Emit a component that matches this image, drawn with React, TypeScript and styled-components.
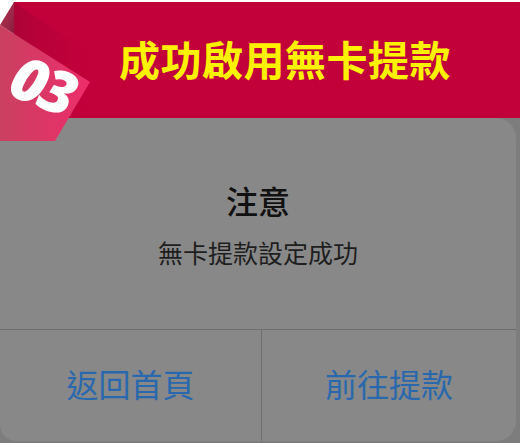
import styled, { createGlobalStyle } from "styled-components";

const GlobalStyle = createGlobalStyle`
  html, body {
    margin: 0;
    padding: 0;
    background: #ffffff;
  }
  body {
    font-family: "Noto Sans CJK TC", "Noto Sans", sans-serif;
  }
`;

const Stage = styled.div`
  position: relative;
  width: 520px;
  height: 443px;
  overflow: hidden;
  display: flex;
  flex-direction: column;
  background: #ffffff;
`;

const Banner = styled.header`
  margin: 2px 0 0 14px;
  height: 116px;
  flex-shrink: 0;
  display: flex;
  align-items: center;
  padding-left: 105px;
  background: #c2003a;
`;

const BannerTitle = styled.h1`
  margin: 0 0 4px;
  font-size: 41px;
  font-weight: 700;
  line-height: 1;
  color: #fff200;
  letter-spacing: 0.5px;
`;

const Ribbon = styled.div`
  position: absolute;
  left: 0;
  top: 0;
  width: 100px;
  height: 142px;
`;

const Number = styled.span`
  position: absolute;
  left: 6px;
  top: 54px;
  width: 74px;
  text-align: center;
  font-family: "Open Sans", "Noto Sans", sans-serif;
  font-size: 60px;
  font-weight: 800;
  font-style: italic;
  color: #ffffff;
  letter-spacing: -4px;
  line-height: 60px;
  transform: rotate(22deg);
  transform-origin: center;
`;

const Backdrop = styled.div`
  flex: 1;
  display: flex;
  padding: 0 4px 2px 0;
  background: #7d7d7d;
`;

const Dialog = styled.section`
  flex: 1;
  display: flex;
  flex-direction: column;
  background: #888888;
  border-radius: 0 20px 20px 16px;
`;

const Body = styled.div`
  height: 211px;
  display: flex;
  flex-direction: column;
  align-items: center;
  padding-top: 62px;
  box-sizing: border-box;
`;

const Title = styled.h2`
  margin: 0;
  font-size: 32px;
  font-weight: 500;
  line-height: 40px;
  color: #111111;
`;

const Message = styled.p`
  margin: 16px 0 0;
  font-size: 25px;
  font-weight: 400;
  line-height: 32px;
  color: #1e1e1e;
`;

const Actions = styled.div`
  flex: 1;
  display: grid;
  grid-template-columns: 261px 1fr;
  border-top: 1px solid #6e6e6e;
`;

const ActionButton = styled.button<{ $divided?: boolean }>`
  display: flex;
  align-items: center;
  justify-content: center;
  padding: 0 0 6px;
  border: none;
  border-left: ${(p) => (p.$divided ? "1px solid #6e6e6e" : "none")};
  background: transparent;
  font-family: inherit;
  font-size: 32px;
  font-weight: 400;
  color: #2a68ad;
  cursor: pointer;
`;

export default function App() {
  return (
    <>
      <GlobalStyle />
      <Stage>
        <Banner>
          <BannerTitle>成功啟用無卡提款</BannerTitle>
        </Banner>
        <Backdrop>
          <Dialog>
            <Body>
              <Title>注意</Title>
              <Message>無卡提款設定成功</Message>
            </Body>
            <Actions>
              <ActionButton>返回首頁</ActionButton>
              <ActionButton $divided>前往提款</ActionButton>
            </Actions>
          </Dialog>
        </Backdrop>
        <Ribbon>
          <svg width="100" height="142" viewBox="0 0 100 142">
            <defs>
              <linearGradient id="rib" x1="0" y1="0" x2="1" y2="0">
                <stop offset="0" stopColor="#c9405f" />
                <stop offset="1" stopColor="#ee2d6c" />
              </linearGradient>
              <linearGradient id="fold" x1="0" y1="0" x2="1" y2="1">
                <stop offset="0" stopColor="#b43a55" />
                <stop offset="1" stopColor="#8a1c3c" />
              </linearGradient>
              <linearGradient id="shade" x1="0" y1="0" x2="1" y2="0">
                <stop offset="0" stopColor="#7a0a2c" stopOpacity="0.6" />
                <stop offset="1" stopColor="#c2003a" stopOpacity="0" />
              </linearGradient>
            </defs>
            <polygon points="14,2 14,118 100,118 100,60" fill="url(#shade)" opacity="0.5" />
            <polygon points="0,25 14,2 14,34" fill="url(#fold)" />
            <polygon points="0,25 90,82 55,141 0,141" fill="url(#rib)" />
          </svg>
          <Number>03</Number>
        </Ribbon>
      </Stage>
    </>
  );
}
